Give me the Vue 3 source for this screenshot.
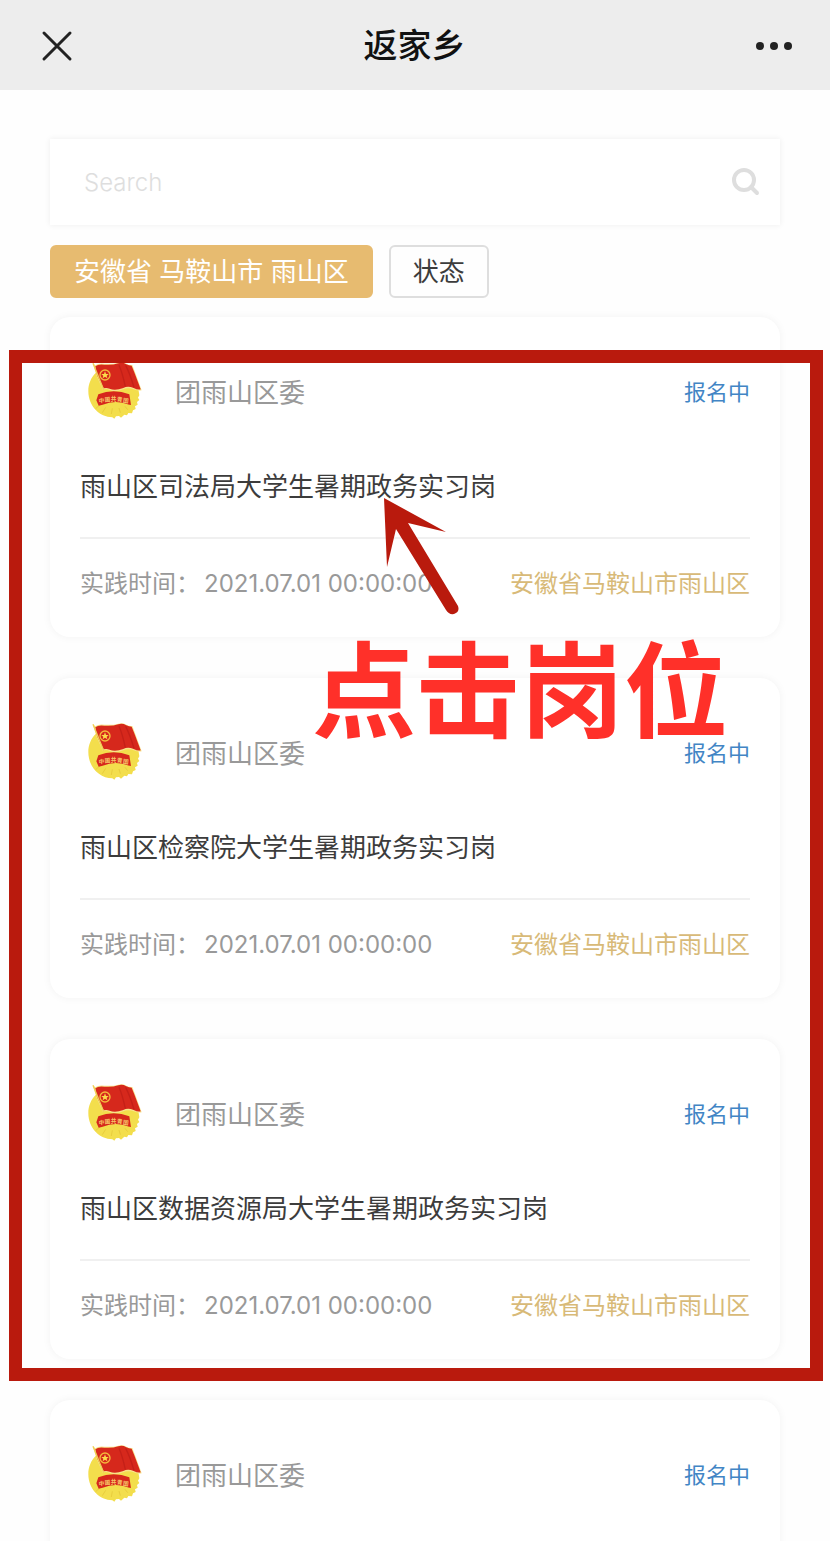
<template>
    <div class="page">
        <header class="navbar">
            <button class="nav_btn" type="button" aria-label="关闭">
                <svg width="32" height="32" viewBox="0 0 32 32">
                    <path d="M3 3L29 29M29 3L3 29" fill="none" stroke="#222" stroke-width="3" stroke-linecap="round" />
                </svg>
            </button>
            <h1>返家乡</h1>
            <button class="nav_btn" type="button" aria-label="更多">
                <svg width="36" height="8" viewBox="0 0 36 8" fill="#222">
                    <circle cx="4" cy="4" r="4" />
                    <circle cx="18" cy="4" r="4" />
                    <circle cx="32" cy="4" r="4" />
                </svg>
            </button>
        </header>
        <main class="content">
            <form class="search" @submit.prevent>
                <input v-model="keyword" type="text" placeholder="Search" aria-label="Search" />
                <button type="submit" aria-label="搜索">
                    <svg width="28" height="28" viewBox="0 0 28 28" fill="none" stroke="#dedede">
                        <circle cx="12" cy="12" r="10" stroke-width="4" />
                        <path d="M19 19L25 25" stroke-width="4" stroke-linecap="round" />
                    </svg>
                </button>
            </form>
            <div class="filters">
                <button class="filter on" type="button">{{ region }}</button>
                <button class="filter" type="button">状态</button>
            </div>
            <div class="list_wrap">
                <ul class="list">
                    <li class="card" v-for="(item, index) in posts" :key="index">
                        <div class="card_head">
                            <svg class="emblem" viewBox="15 9 210 210" aria-hidden="true">
                                <path class="gold" d="M118 40C73 40 40 75 40 118C40 162 74 196 112 196L118 200L123 193L132 192L138 197L148 188L156 190L160 183L171 184L174 175L182 171L180 163L188 158L186 150L193 144L189 137L193 130L190 110L180 76L150 45Z" />
                                <path class="rays" d="M75 158L62 170M92 166L82 182M112 169L109 186M132 168L136 182M150 163L158 173" />
                                <path class="outline" d="M54 34L61 40Q70 33 88 35Q112 37 130 32Q142 28 154 35Q162 40 172 39L181 63L200 115Q188 117 176 112Q158 105 145 112Q120 122 104 114Q94 109 83 113L64 70Z" />
                                <path class="flag" d="M61 43Q70 35 88 38Q112 40 130 34Q142 30 154 37Q162 41 170 41L179 64L197 112Q188 114 176 108Q158 101 145 108Q120 117 104 110Q94 106 86 109L66 70Z" />
                                <path class="fold" d="M132 40Q142 62 151 104M152 40Q165 65 177 106" />
                                <path class="pole" d="M54 34L86 113" />
                                <circle class="ring" cx="90" cy="69" r="15" />
                                <path class="star" d="M90 58L93 66L101 66L95 71L97 79L90 74L83 79L85 71L79 66L87 66Z" />
                                <path class="band" d="M70 127Q116 109 163 127L168 159Q158 157 154 155Q118 144 83 158L71 161L64 145Z" />
                                <text class="band_text" x="72 89 107 125 143" y="153 149 147 148 151" rotate="-8 -4 0 4 8">中国共青团</text>
                            </svg>
                            <span class="org">{{ item.org }}</span>
                            <span class="state">{{ item.state }}</span>
                        </div>
                        <h2><a href="#">{{ item.title }}</a></h2>
                        <div class="card_foot">
                            <p>实践时间：<time>{{ item.time }}</time></p>
                            <span class="area">{{ item.area }}</span>
                        </div>
                    </li>
                </ul>
                <!-- guide -->
                <div class="guide_frame"></div>
                <svg class="guide_arrow" width="76" height="118" viewBox="0 0 76 118" aria-hidden="true">
                    <path d="M0 1L62 35L24 26L74 109Q76 115 70 117Q65 118 62 113L12 32L3 70Z" fill="#b91a0d" />
                </svg>
                <strong class="guide_text">点击岗位</strong>
            </div>
        </main>
    </div>
</template>

<script setup>
import { ref } from 'vue';

// search
const keyword = ref('');
// filter
const region = ref('安徽省 马鞍山市 雨山区');
// list
const posts = ref([
    { org: '团雨山区委', state: '报名中', title: '雨山区司法局大学生暑期政务实习岗', time: '2021.07.01 00:00:00', area: '安徽省马鞍山市雨山区' },
    { org: '团雨山区委', state: '报名中', title: '雨山区检察院大学生暑期政务实习岗', time: '2021.07.01 00:00:00', area: '安徽省马鞍山市雨山区' },
    { org: '团雨山区委', state: '报名中', title: '雨山区数据资源局大学生暑期政务实习岗', time: '2021.07.01 00:00:00', area: '安徽省马鞍山市雨山区' },
    { org: '团雨山区委', state: '报名中', title: '雨山区大学生暑期政务实习岗', time: '2021.07.01 00:00:00', area: '安徽省马鞍山市雨山区' },
]);
</script>

<style>
body {
    margin: 0;
    background: #fefefe;
}
</style>

<style scoped>
.page {
    height: 100vh;
    overflow: hidden;
    font-family: Inter, "Noto Sans CJK SC", sans-serif;
    color: #3c3c3c;
}

h1,
h2,
p,
ul {
    margin: 0;
    padding: 0;
    list-style: none;
}

button {
    padding: 0;
    border: 0;
    background: none;
    font-family: inherit;
    cursor: pointer;
}

svg {
    display: block;
}

/* navbar */
.navbar {
    display: flex;
    align-items: center;
    justify-content: space-between;
    box-sizing: border-box;
    height: 90px;
    padding: 2px 38px 0 41px;
    background: #ededed;
}

.navbar h1 {
    font-size: 34px;
    font-weight: 500;
    line-height: 48px;
    color: #111;
}

.content {
    padding: 49px 50px 0;
}

/* search */
.search {
    display: flex;
    align-items: center;
    height: 86px;
    padding: 0 20px 0 34px;
    background: #fff;
    box-shadow: 0 0 6px rgba(0, 0, 0, 0.07);
}

.search input {
    flex: 1;
    min-width: 0;
    padding: 0;
    border: 0;
    outline: 0;
    background: none;
    font-family: Inter, sans-serif;
    font-size: 24px;
    font-weight: 300;
    color: #3c3c3c;
}

.search input::placeholder {
    color: #dedede;
    opacity: 1;
}

/* filters */
.filters {
    display: flex;
    gap: 16px;
    margin: 20px 0 19px;
}

.filter {
    height: 53px;
    padding: 0 22px;
    border: 2px solid #dedede;
    border-radius: 6px;
    font-size: 26px;
    line-height: 40px;
    color: #3c3c3c;
}

.filter.on {
    border-color: #e7bb70;
    background: #e7bb70;
    color: #fff;
}

/* list */
.list_wrap {
    position: relative;
}

.list {
    display: flex;
    flex-direction: column;
    gap: 41px;
}

.card {
    padding: 38px 30px 33px;
    border-radius: 20px;
    background: #fff;
    box-shadow: 0 0 8px rgba(0, 0, 0, 0.05);
}

.card_head {
    display: flex;
    align-items: center;
}

.emblem {
    width: 70px;
    height: 70px;
}

.org {
    margin-left: 25px;
    font-size: 26px;
    color: #999;
}

.state {
    margin-left: auto;
    font-size: 22px;
    color: #4285c5;
}

.card h2 {
    margin: 42px 0 30px;
    font-size: 26px;
    font-weight: 400;
    line-height: 40px;
}

.card h2 a {
    color: #3c3c3c;
    text-decoration: none;
}

.card_foot {
    display: flex;
    justify-content: space-between;
    padding-top: 25px;
    border-top: 2px solid #f0f0f0;
    font-size: 24px;
    line-height: 40px;
    white-space: nowrap;
    color: #999;
}

.card_foot time {
    margin-left: 4px;
}

.area {
    color: #d8ba78;
}

/* emblem */
.gold {
    fill: #f3de4c;
}

.rays {
    fill: none;
    stroke: #e9cd3d;
    stroke-width: 3;
}

.outline {
    fill: #f8e38a;
}

.flag,
.band {
    fill: #d6281c;
}

.fold {
    fill: none;
    stroke: #c42018;
    stroke-width: 4;
}

.pole {
    fill: none;
    stroke: #f0cf55;
    stroke-width: 4;
}

.ring {
    fill: none;
    stroke: #f4b93c;
    stroke-width: 4;
}

.star {
    fill: #fbdc4b;
}

.band_text {
    font-family: "Noto Sans CJK SC", sans-serif;
    font-size: 17px;
    font-weight: 700;
    fill: #f6c467;
}

/* guide */
.guide_frame {
    position: absolute;
    top: 33px;
    right: -43px;
    left: -41px;
    box-sizing: border-box;
    height: 1031px;
    border: 13px solid #b91a0d;
    pointer-events: none;
}

.guide_arrow {
    position: absolute;
    top: 180px;
    left: 334px;
    pointer-events: none;
}

.guide_text {
    position: absolute;
    top: 308px;
    left: 262px;
    font-family: "Noto Sans CJK SC", sans-serif;
    font-size: 104px;
    font-weight: 700;
    line-height: 120px;
    white-space: nowrap;
    color: #ff3029;
    pointer-events: none;
}
</style>
